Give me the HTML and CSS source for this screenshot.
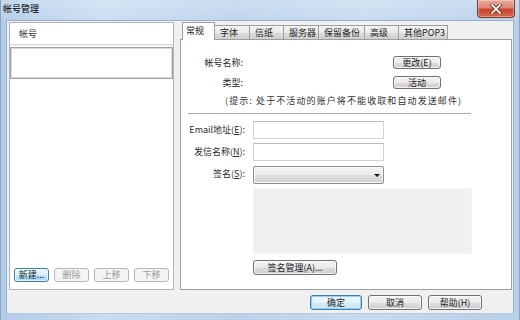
FILE: index.html
```html
<!DOCTYPE html>
<html>
<head>
<meta charset="utf-8">
<title>帐号管理</title>
<link rel="stylesheet" href="styles.css">
</head>
<body>
<div class="win">
  <div class="titlebar">
    <span class="title">帐号管理</span>
    <div class="close">
      <svg width="12" height="10" viewBox="0 0 12 10"><path d="M2 1 L10 9 M10 1 L2 9" stroke="#4a1a12" stroke-width="3.2" stroke-linecap="square"/><path d="M2 1 L10 9 M10 1 L2 9" stroke="#ffffff" stroke-width="1.8" stroke-linecap="square"/></svg>
    </div>
  </div>
  <div class="client">
    <div class="main">
      <div class="accounts">
        <div class="acc-head">帐号</div>
        <div class="acc-list"><div class="acc-item"></div></div>
        <div class="acc-btns">
          <button class="btn hot">新建...</button>
          <button class="btn dis">删除</button>
          <button class="btn dis">上移</button>
          <button class="btn dis">下移</button>
        </div>
      </div>
      <div class="tabctl">
        <div class="tabs">
          <div class="tab active w-general">常规</div>
          <div class="tab w-font">字体</div>
          <div class="tab w-paper">信纸</div>
          <div class="tab w-server">服务器</div>
          <div class="tab w-backup">保留备份</div>
          <div class="tab w-adv">高级</div>
          <div class="tab w-pop">其他POP3</div>
        </div>
        <div class="panel">
          <div class="info">
            <span class="lbl">帐号名称:</span><span></span><button class="btn small">更改(E)</button>
            <span class="lbl">类型:</span><span></span><button class="btn small">活动</button>
          </div>
          <div class="hint">(提示: 处于不活动的账户将不能收取和自动发送邮件)</div>
          <div class="sep"></div>
          <div class="form">
            <span class="lbl">Email地址(<u>E</u>):</span><div class="field"></div>
            <span class="lbl">发信名称(<u>N</u>):</span><div class="field"></div>
            <span class="lbl">签名(<u>S</u>):</span><div class="combo"><span class="arrow"></span></div>
          </div>
          <div class="sigbox"></div>
          <button class="btn sigbtn">签名管理(A)...</button>
        </div>
      </div>
    </div>
    <div class="footer">
      <button class="btn def">确定</button>
      <button class="btn wide">取消</button>
      <button class="btn wide">帮助(H)</button>
    </div>
  </div>
</div>
</body>
</html>
```
FILE: styles.css
```css
html, body {
  margin: 0;
  padding: 0;
}
body {
  width: 520px;
  height: 320px;
  overflow: hidden;
  font-family: "Noto Sans CJK SC", "Liberation Sans", sans-serif;
  font-size: 9px;
  color: #2a2a2a;
}
.win {
  width: 520px;
  height: 320px;
  box-sizing: border-box;
  border-left: 1px solid #8aa6c6;
  border-right: 1px solid #8aa6c6;
  display: flex;
  flex-direction: column;
  background: linear-gradient(90deg, #b3cce8 0%, #c9dcf1 20%, #bcd2ea 45%, #c6daef 70%, #b8cfe9 100%);
}
.titlebar {
  height: 20px;
  flex-shrink: 0;
  display: flex;
  align-items: flex-start;
  background: linear-gradient(180deg, rgba(255,255,255,0.25) 0%, rgba(255,255,255,0.05) 100%);
}
.title {
  margin: 3px 0 0 2px;
  line-height: 12px;
  font-size: 9px;
  color: #000;
}
.close {
  margin-left: auto;
  margin-right: 4px;
  width: 38px;
  height: 18px;
  box-sizing: border-box;
  border: 1px solid #7a3a30;
  border-top: none;
  border-radius: 0 0 4px 4px;
  background: linear-gradient(180deg, #e9a99b 0%, #dc8673 45%, #c8452c 55%, #d3684f 100%);
  box-shadow: inset 0 0 0 1px rgba(255,255,255,0.35);
  display: flex;
  align-items: center;
  justify-content: center;
}
.client {
  margin: 0 5px;
  height: 294px;
  box-sizing: border-box;
  border: 1px solid #97b0cd;
  border-bottom-color: #b6c9de;
  background: #f0f0f0;
  padding: 1px 1px 0 2px;
  display: flex;
  flex-direction: column;
}
.main {
  height: 268px;
  display: flex;
  gap: 6px;
}
.accounts {
  width: 165px;
  box-sizing: border-box;
  border: 1px solid #b4b4b4;
  background: #fff;
  display: flex;
  flex-direction: column;
}
.acc-head {
  height: 21px;
  line-height: 21px;
  padding-left: 9px;
  border-bottom: 1px solid #d8d8d8;
  box-shadow: 0 1px 0 #f0f0f0;
  color: #333;
}
.acc-list {
  flex: 1;
  padding-top: 2px;
}
.acc-item {
  height: 32px;
  box-sizing: border-box;
  border: 1px solid #a2a2a2;
  box-shadow: inset 0 0 0 1px #dadada;
}
.acc-btns {
  display: flex;
  gap: 5px;
  padding: 0 0 7px 4px;
}
.btn {
  height: 14px;
  box-sizing: border-box;
  padding: 0;
  margin: 0;
  border: 1px solid #707070;
  border-radius: 3px;
  background: linear-gradient(180deg, #f3f3f3 0%, #ebebeb 50%, #dddddd 51%, #cfcfcf 100%);
  box-shadow: inset 0 0 0 1px rgba(255,255,255,0.7);
  font-family: "Noto Sans CJK SC", "Liberation Sans", sans-serif;
  font-size: 9px;
  line-height: 12px;
  color: #222;
}
.acc-btns .btn {
  width: 35px;
}
.btn.hot {
  border-color: #3c7fb1;
  background: linear-gradient(180deg, #eaf6fd 0%, #d9f0fc 50%, #bee6fd 51%, #a7d9f5 100%);
}
.btn.dis {
  border-color: #b5b9bc;
  background: #f4f4f4;
  color: #9a9a9a;
  box-shadow: none;
}
.tabctl {
  flex: 1;
  display: flex;
  flex-direction: column;
}
.tabs {
  height: 17px;
  display: flex;
  align-items: flex-end;
  padding-left: 2px;
  position: relative;
  z-index: 1;
}
.tab {
  height: 14px;
  box-sizing: border-box;
  border: 1px solid #9a9ea6;
  border-bottom: none;
  margin-left: -1px;
  padding-left: 5px;
  line-height: 13px;
  background: linear-gradient(180deg, #f2f2f2 0%, #ebebeb 50%, #dddddd 51%, #cfcfcf 100%);
  color: #222;
  white-space: nowrap;
}
.tab.active {
  height: 18px;
  margin-bottom: -1px;
  margin-left: 0;
  background: #fff;
  line-height: 15px;
  padding-left: 3px;
}
.w-general { width: 33px; }
.w-font { width: 36px; }
.w-paper { width: 35px; }
.w-server { width: 36px; }
.w-backup { width: 47px; }
.w-adv { width: 35px; }
.w-pop { width: 50px; }
.panel {
  flex: 1;
  box-sizing: border-box;
  border: 1px solid #9a9ea6;
  background: #fff;
}
.info {
  margin-top: 16px;
  display: grid;
  grid-template-columns: 62px 150px 48px;
  grid-template-rows: 13px 13px;
  row-gap: 7px;
  align-items: center;
}
.lbl {
  text-align: right;
  line-height: 12px;
  white-space: nowrap;
}
.btn.small {
  height: 13px;
  line-height: 11px;
}
.hint {
  margin: 6px 0 0 44px;
  line-height: 12px;
  letter-spacing: 1.1px;
  color: #333;
  white-space: nowrap;
}
.sep {
  margin: 6px 0 0 7px;
  width: 283px;
  border-top: 1px solid #a8a8a8;
  border-bottom: 1px solid #fff;
}
.form {
  margin-top: 6px;
  display: grid;
  grid-template-columns: 64px 131px;
  grid-template-rows: 18px 18px 18px;
  column-gap: 8px;
  row-gap: 4px;
  align-items: center;
}
.field {
  height: 18px;
  box-sizing: border-box;
  border: 1px solid #d0d3d8;
  border-top-color: #b8bbc2;
  background: #fff;
}
.combo {
  height: 18px;
  margin-top: 2px;
  box-sizing: border-box;
  border: 1px solid #8e8f8f;
  border-radius: 2px;
  background: linear-gradient(180deg, #f3f3f3 0%, #ebebeb 50%, #dddddd 51%, #d3d3d3 100%);
  box-shadow: inset 0 0 0 1px rgba(255,255,255,0.7);
  display: flex;
  align-items: center;
  justify-content: flex-end;
  padding-right: 3px;
}
.arrow {
  width: 0;
  height: 0;
  border-left: 3px solid transparent;
  border-right: 3px solid transparent;
  border-top: 3px solid #111;
}
.sigbox {
  margin: 5px 0 0 72px;
  width: 219px;
  height: 66px;
  background: #f0f0f0;
  border: 1px solid #f4f4f4;
  box-sizing: border-box;
}
.btn.sigbtn {
  display: block;
  margin: 6px 0 0 72px;
  width: 84px;
  height: 15px;
}
.footer {
  display: flex;
  justify-content: flex-end;
  gap: 6px;
  padding: 5px 30px 0 0;
}
.footer .btn {
  height: 15px;
  width: 54px;
}
.footer .btn.def {
  width: 52px;
  border-color: #3c7fb1;
  box-shadow: inset 0 0 0 1px #8fd3f5;
  background: linear-gradient(180deg, #f1f8fd 0%, #e5f2fb 50%, #d6ebf8 51%, #cbe5f6 100%);
}
```
